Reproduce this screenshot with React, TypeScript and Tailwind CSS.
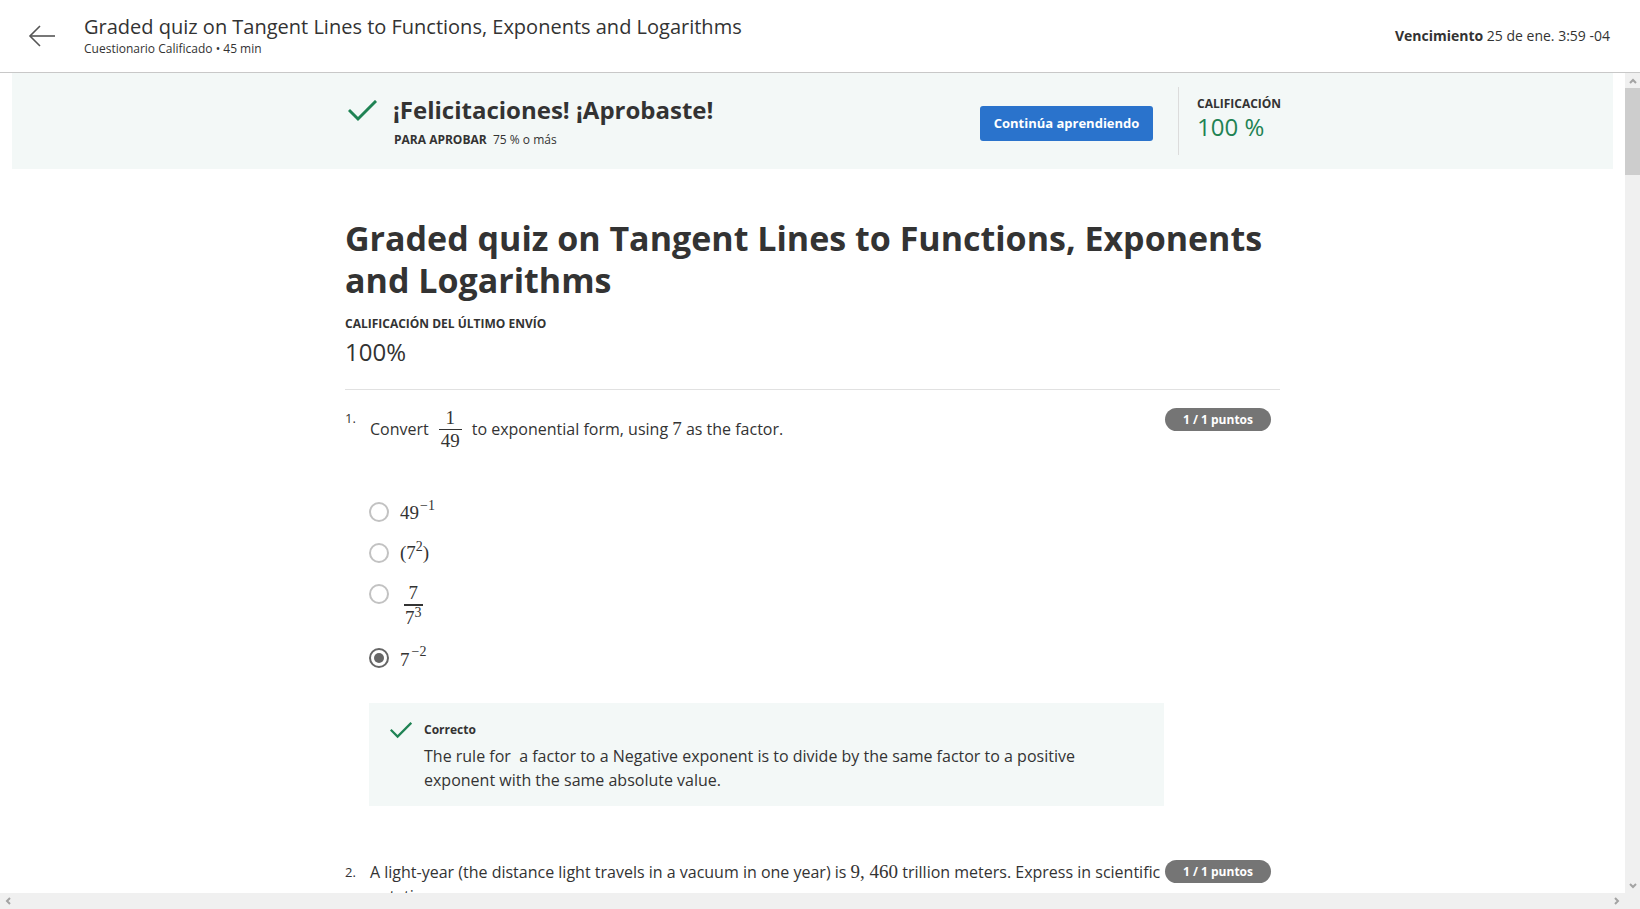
import React from 'react';

const math = "font-['Liberation_Serif','DejaVu_Serif',serif]";

const Check = ({ className }: { className?: string }) => (
  <svg viewBox="0 0 29 22" className={className} fill="none" stroke="#1f8354" strokeWidth="3" strokeLinecap="square">
    <polyline points="2,11 10,19 27,2" />
  </svg>
);

const Badge = () => (
  <div className="shrink-0 h-[23px] w-[106px] rounded-full bg-[#757575] text-white text-[12px] font-bold flex items-center justify-center mr-[9px]">
    1 / 1 puntos
  </div>
);

const Radio = ({ checked }: { checked?: boolean }) => (
  <div
    className={`shrink-0 w-[20px] h-[20px] rounded-full border-2 flex items-center justify-center ${
      checked ? 'border-[#666666]' : 'border-[#c2c2c2]'
    }`}
  >
    {checked && <div className="w-[10px] h-[10px] rounded-full bg-[#666666]" />}
  </div>
);

const Chevron = ({ dir }: { dir: 'up' | 'down' | 'left' | 'right' }) => {
  const pts = {
    up: '2,7 5,4 8,7',
    down: '2,3 5,6 8,3',
    left: '7,2 4,5 7,8',
    right: '3,2 6,5 3,8',
  }[dir];
  return (
    <svg viewBox="0 0 10 10" className="w-[10px] h-[10px]" fill="none" stroke="#a3a3a3" strokeWidth="2">
      <polyline points={pts} />
    </svg>
  );
};

export default function App() {
  return (
    <div className="w-[1640px] h-[909px] overflow-hidden flex flex-col bg-white text-[#333333] font-['Open_Sans','Noto_Sans',sans-serif]">
      {/* header */}
      <header className="h-[73px] shrink-0 border-b border-[#c8c8c8] flex items-start pl-[28px] pr-[30px]">
        <svg viewBox="0 0 28 22" className="w-[28px] h-[22px] mt-[25px]" fill="none" stroke="#555555" strokeWidth="1.6">
          <line x1="2" y1="11" x2="27" y2="11" />
          <polyline points="12,1 2,11 12,21" />
        </svg>
        <div className="ml-[28px] pt-[14px] flex-1">
          <div className="text-[20px] leading-[26px] text-[#333333]">
            Graded quiz on Tangent Lines to Functions, Exponents and Logarithms
          </div>
          <div className="text-[12px] leading-[16px] mt-[1px]">Cuestionario Calificado • 45 min</div>
        </div>
        <div className="text-[14px] leading-[20px] mt-[26px]">
          <span className="font-bold">Vencimiento</span> 25 de ene. 3:59 -04
        </div>
      </header>

      <div className="flex flex-1 min-h-0">
        <main className="flex-1 overflow-hidden">
          {/* banner */}
          <div className="mx-3 h-[96px] bg-[#f3f8f7] flex items-center">
            <div className="w-[935px] mx-auto flex items-center">
              <div className="flex-1 flex items-start">
                <Check className="w-[29px] h-[22px] ml-[3px] mt-[6px]" />
                <div className="ml-[16px]">
                  <div className="text-[24px] leading-[32px] font-bold">¡Felicitaciones! ¡Aprobaste!</div>
                  <div className="text-[12px] leading-[18px] mt-[5px] ml-[1px]">
                    <span className="font-bold">PARA APROBAR</span>&nbsp; 75 % o más
                  </div>
                </div>
              </div>
              <button className="w-[173px] h-[35px] rounded-[3px] bg-[#2a73cc] text-white text-[13px] font-bold whitespace-nowrap mr-[25px] mt-[4px] pt-[1px]">
                Continúa aprendiendo
              </button>
              <div className="w-[102px] h-[68px] border-l border-[#dcdcdc] pl-[18px] pt-[9px]">
                <div className="text-[12px] leading-[16px] font-bold">CALIFICACIÓN</div>
                <div className="text-[24px] leading-[30px] text-[#1f8354] whitespace-nowrap">100 %</div>
              </div>
            </div>
          </div>

          {/* content */}
          <div className="w-[935px] mx-auto pt-[48px]">
            <h1 className="text-[34px] leading-[42px] font-bold">
              Graded quiz on Tangent Lines to Functions, Exponents and Logarithms
            </h1>
            <div className="text-[12px] leading-[18px] font-bold mt-[14px]">CALIFICACIÓN DEL ÚLTIMO ENVÍO</div>
            <div className="text-[24px] leading-[32px] mt-[3px]">100%</div>
            <div className="border-t border-[#e1e1e1] mt-[21px]" />

            {/* question 1 */}
            <div className="flex items-start mt-[18px]">
              <div className="w-[25px] shrink-0 text-[13px] leading-[20px]">1.</div>
              <div className="flex-1 flex items-center h-[44px] text-[16px] -mt-[1px]">
                <span>Convert</span>
                <span className={`${math} inline-flex flex-col items-center mx-[10px] text-[19px] leading-[22px]`}>
                  <span>1</span>
                  <span className="border-t border-[#333333] px-[2px]">49</span>
                </span>
                <span>
                  to exponential form, using <span className={`${math} text-[19px] leading-none`}>7</span> as the factor.
                </span>
              </div>
              <Badge />
            </div>

            <div className="ml-[24px] mt-[49px] flex flex-col">
              <div className="h-[24px] flex items-center">
                <Radio />
                <span className={`${math} ml-[11px] text-[19px] leading-[24px] mt-[4px]`}>
                  49<span className="text-[14px] relative -top-[9px] ml-[1px]">−1</span>
                </span>
              </div>
              <div className="h-[24px] flex items-center mt-[17px]">
                <Radio />
                <span className={`${math} ml-[11px] text-[19px] leading-[24px] mt-[2px]`}>
                  (7<span className="text-[14px] relative -top-[8px]">2</span>)
                </span>
              </div>
              <div className="h-[52px] flex items-start mt-[17px]">
                <div className="mt-[2px]">
                  <Radio />
                </div>
                <span className={`${math} ml-[15px] inline-flex flex-col items-center text-[19px] leading-[22px]`}>
                  <span>7</span>
                  <span className="border-t-2 border-[#333333] px-[1px] leading-[24px]">
                    7<span className="text-[14px] relative -top-[7px]">3</span>
                  </span>
                </span>
              </div>
              <div className="h-[24px] flex items-center mt-[12px]">
                <Radio checked />
                <span className={`${math} ml-[11px] text-[19px] leading-[24px] mt-[6px]`}>
                  7<span className="text-[14px] relative -top-[10px] ml-[2px]">−2</span>
                </span>
              </div>
            </div>

            {/* feedback */}
            <div className="ml-[24px] mt-[33px] w-[795px] bg-[#f3f8f7] pl-[21px] pt-[18px] pb-[14px]">
              <div className="flex items-center h-[18px]">
                <Check className="w-[22px] h-[17px]" />
                <span className="ml-[12px] text-[12px] leading-[18px] font-bold">Correcto</span>
              </div>
              <p className="ml-[34px] mt-[5px] w-[690px] text-[16px] leading-[24px]">
                The rule for{'\u00a0'} a factor to a Negative exponent is to divide by the same factor to a positive exponent with
                the same absolute value.
              </p>
            </div>

            {/* question 2 */}
            <div className="flex items-start mt-[54px]">
              <div className="w-[25px] shrink-0 text-[13px] leading-[24px]">2.</div>
              <div className="w-[792px] text-[16px] leading-[24px]">
                A light-year (the distance light travels in a vacuum in one year) is{' '}
                <span className={`${math} text-[19px] leading-none`}>9, 460</span> trillion meters. Express in scientific
                notation.
              </div>
              <div className="flex-1" />
              <Badge />
            </div>
          </div>
        </main>

        {/* vertical scrollbar */}
        <div className="w-[15px] shrink-0 bg-[#f0f0f0] flex flex-col">
          <div className="h-[15px] flex items-center justify-center">
            <Chevron dir="up" />
          </div>
          <div className="h-[87px] bg-[#cdcdcd]" />
          <div className="flex-1" />
          <div className="h-[15px] flex items-center justify-center">
            <Chevron dir="down" />
          </div>
        </div>
      </div>

      {/* horizontal scrollbar */}
      <div className="h-[16px] shrink-0 bg-[#f0f0f0] flex items-center justify-between pl-[3px] pr-[18px]">
        <Chevron dir="left" />
        <Chevron dir="right" />
      </div>
    </div>
  );
}
